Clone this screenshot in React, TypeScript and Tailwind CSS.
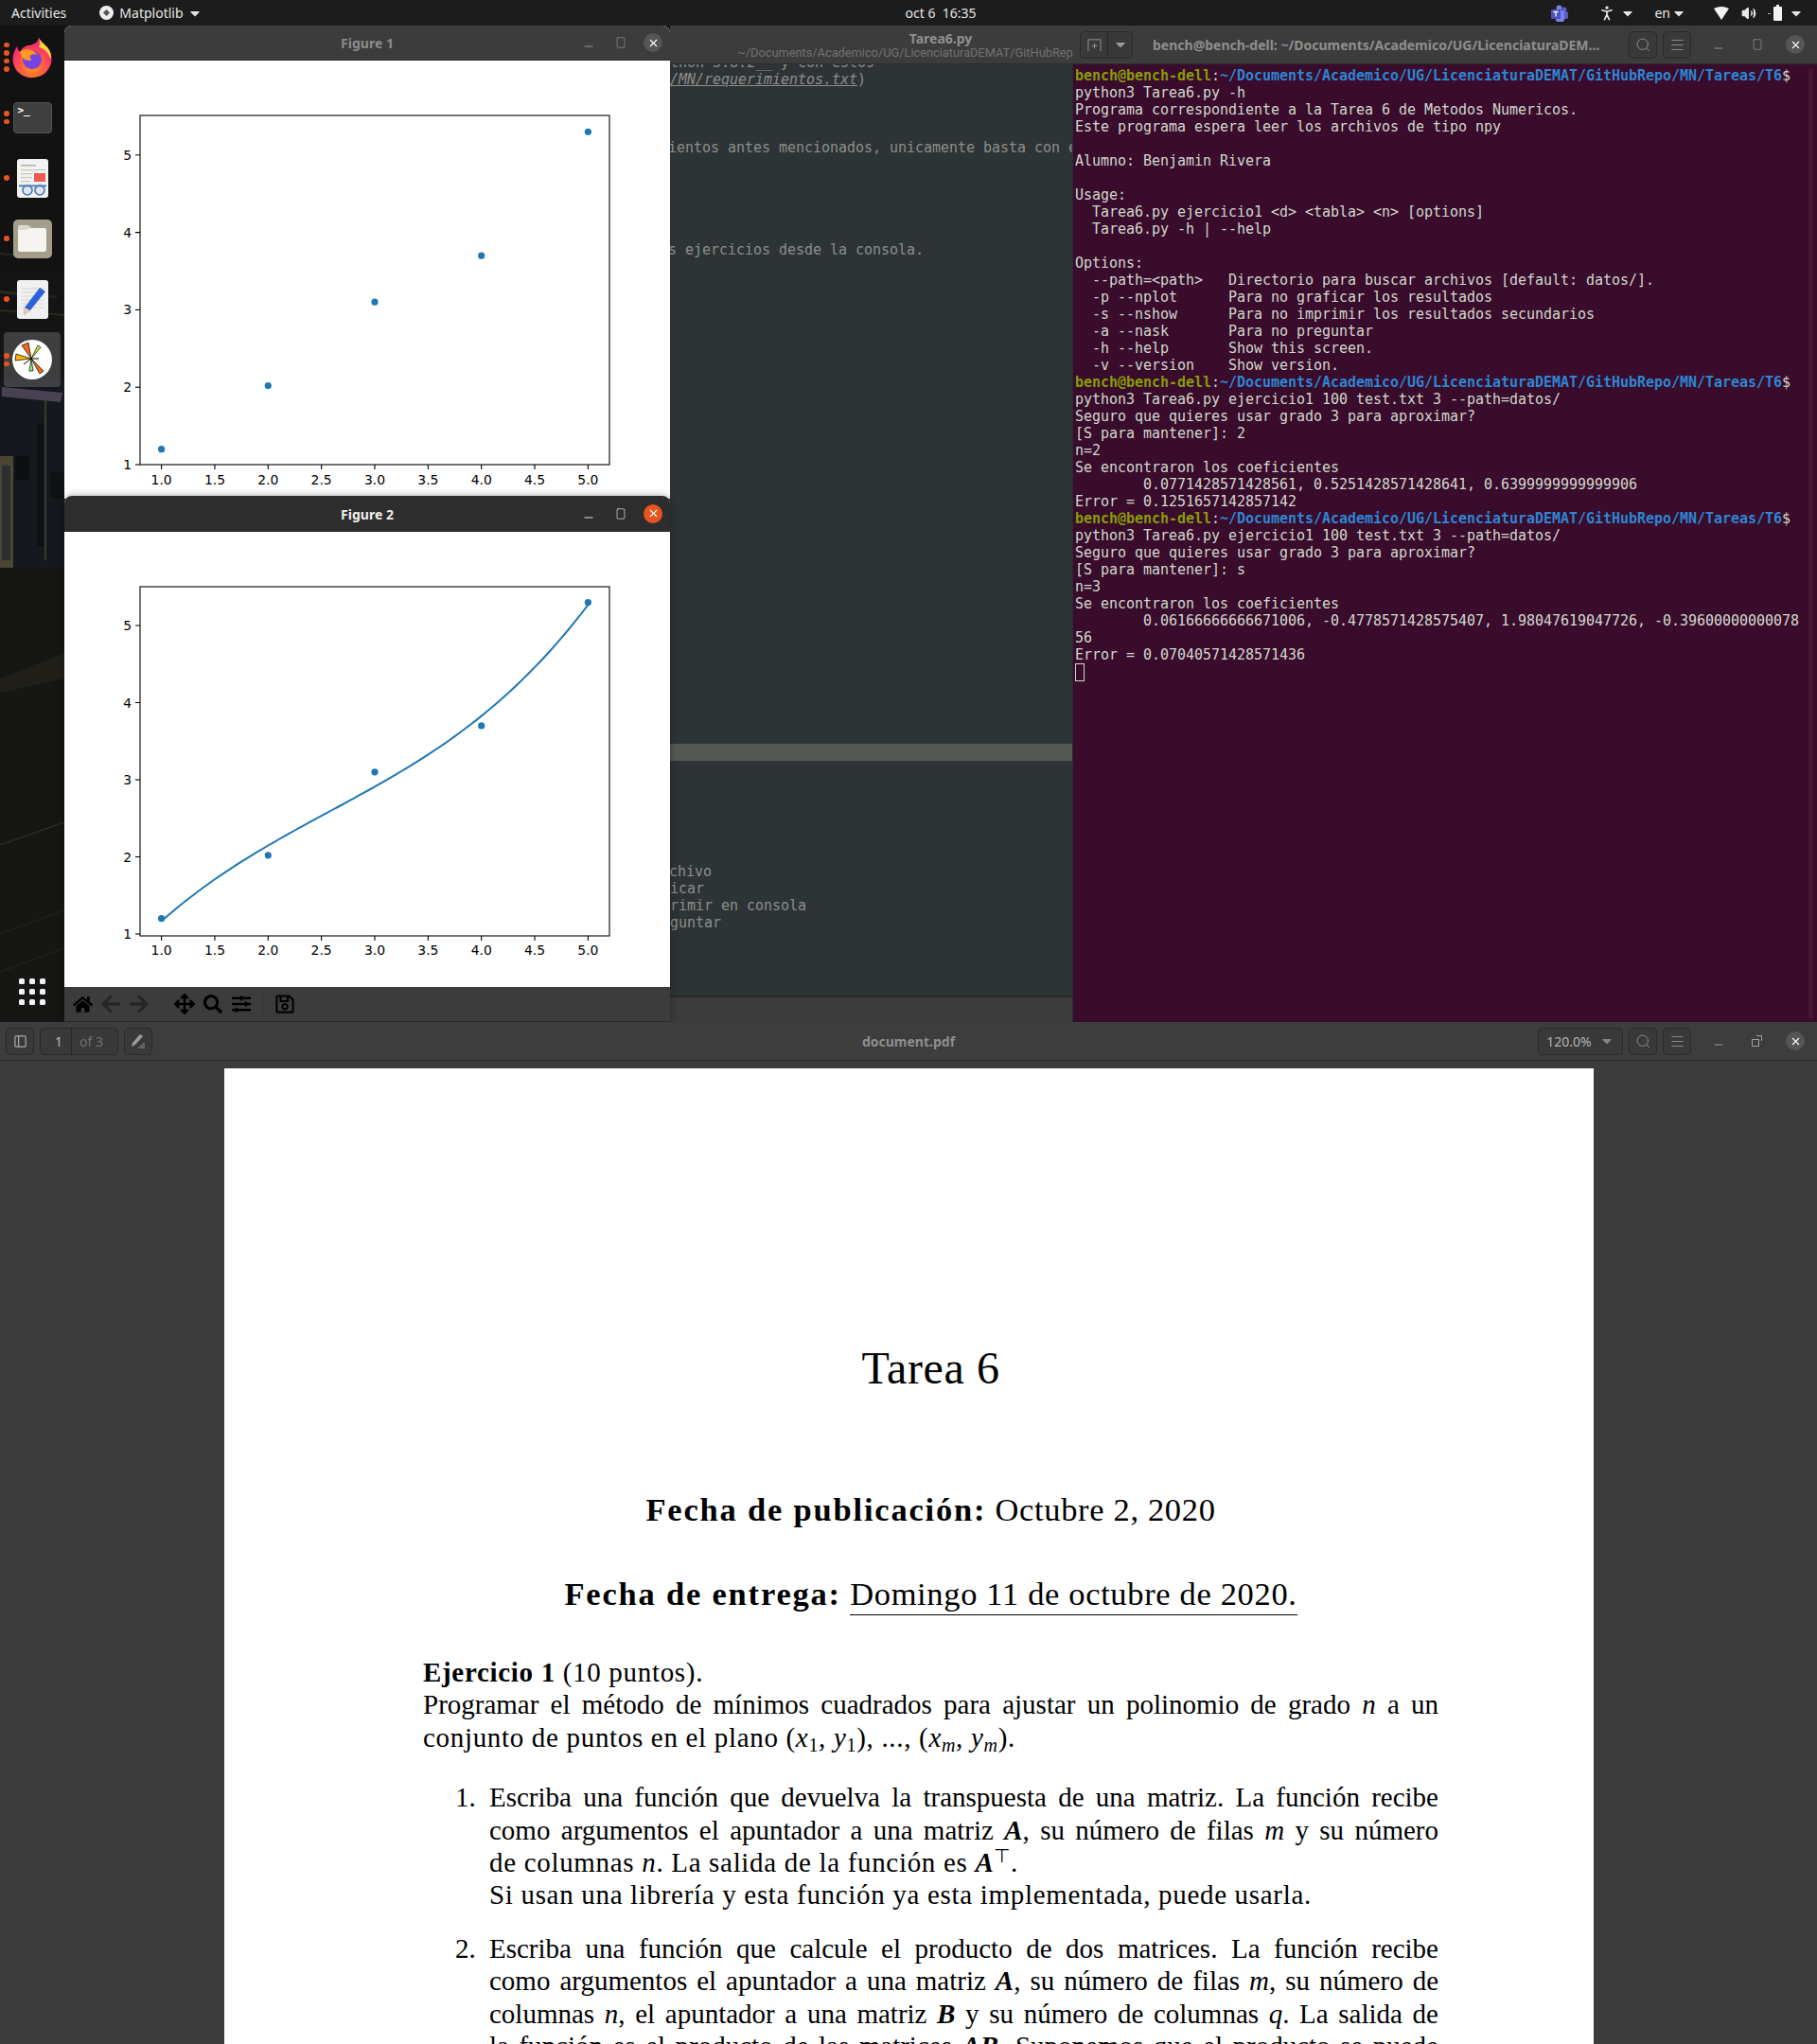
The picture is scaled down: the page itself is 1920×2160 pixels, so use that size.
import { ReactNode } from "react";
import { FaHome, FaArrowLeft, FaArrowRight, FaArrowsAlt, FaSearch, FaSlidersH, FaRegSave, FaCaretDown } from "react-icons/fa";
import { Search, Menu, X, Minus, Square, PanelLeft, PersonStanding, Volume2 } from "lucide-react";

const ui = "font-['Noto_Sans','Roboto',sans-serif]";
const mono = "font-['DejaVu_Sans_Mono','Liberation_Mono',monospace] text-[15px] tracking-[-0.03px]";

// matplotlib figure, same size in both windows
const xTicks = [1, 1.5, 2, 2.5, 3, 3.5, 4, 4.5, 5];
const yTicks = [1, 2, 3, 4, 5];
const points: [number, number][] = [[1, 1.2], [2, 2.02], [3, 3.1], [4, 3.7], [5, 5.3]];
const px = (v: number) => 102.6 + 112.7 * (v - 1);

function Plot({ y0, unit, curve }: { y0: number; unit: number; curve?: boolean }) {
  const py = (v: number) => y0 - (v - 1) * unit;
  let d = "";
  if (curve) {
    for (let i = 0; i <= 80; i++) {
      const x = 1 + (i / 80) * 4;
      const y = 0.0616667 * x * x * x - 0.47786 * x * x + 1.98048 * x - 0.396;
      d += (i ? "L" : "M") + px(x).toFixed(1) + " " + py(y).toFixed(1);
    }
  }
  return (
    <svg viewBox="0 0 640 481" className="block shrink-0 w-[640px] h-[481px]">
      <rect x="80" y="58" width="496" height="369" fill="none" stroke="#000" strokeWidth="1.1" />
      {xTicks.map((t) => (
        <g key={t}>
          <line x1={px(t)} x2={px(t)} y1="427" y2="432" stroke="#000" strokeWidth="1.1" />
          <text x={px(t)} y={curve ? 447 : 448} textAnchor="middle" fontSize="13.9" fontFamily="DejaVu Sans" fill="#000">{t.toFixed(1)}</text>
        </g>
      ))}
      {yTicks.map((t) => (
        <g key={t}>
          <line x1="75" x2="80" y1={py(t)} y2={py(t)} stroke="#000" strokeWidth="1.1" />
          <text x="71" y={py(t) + 5} textAnchor="end" fontSize="13.9" fontFamily="DejaVu Sans" fill="#000">{t}</text>
        </g>
      ))}
      {curve && <path d={d} fill="none" stroke="#1f77b4" strokeWidth="2" />}
      {points.map(([x, y]) => (
        <circle key={x} cx={px(x)} cy={py(y)} r="3.6" fill="#1f77b4" />
      ))}
    </svg>
  );
}

function WinControls({ focused, restore, wide }: { focused?: boolean; restore?: boolean; wide?: boolean }) {
  const c = focused ? "text-white" : "text-[#a0a0a0]";
  return (
    <div className={`flex items-center justify-end ${wide ? "pr-[13px]" : "pr-[8px]"} ${c}`}>
      <Minus size={14} strokeWidth={1.5} className="translate-y-[4px]" />
      <div className={wide ? "ml-[27px] mr-[23px]" : "ml-[20px] mr-[17px]"}>
        {restore ? (
          <div className="relative w-[14px] h-[14px]">
            <div className="absolute left-[1px] bottom-[1px] w-[8px] h-[8px] border border-current" />
            <div className="absolute right-[2px] top-[1px] w-[6px] h-[6px] border-t border-r border-current" />
          </div>
        ) : (
          <Square size={14} strokeWidth={1.2} className="scale-x-75" />
        )}
      </div>
      <div className={`w-[20px] h-[20px] rounded-full flex items-center justify-center text-white ${focused ? "bg-[#e95420]" : "bg-[#555555]"}`}>
        <X size={13} strokeWidth={2} />
      </div>
    </div>
  );
}

function FigureWindow({ title, focused, children, className }: { title: string; focused?: boolean; children: ReactNode; className: string }) {
  return (
    <div className={`absolute left-[68px] w-[640px] overflow-hidden rounded-t-[8px] flex flex-col ${className}`}>
      <div className={`shrink-0 grid grid-cols-[1fr_auto_1fr] items-center border-b border-[#262626] ${ui} text-[14px] font-bold ${focused ? "h-[38px] bg-[#2d2d2d] text-[#f0f0f0]" : "h-[37px] bg-[#3c3c3c] text-[#8c8c8c]"}`}>
        <div />
        <div className="pt-[1px]">{title}</div>
        <WinControls focused={focused} />
      </div>
      {children}
    </div>
  );
}

function Btn({ className, children }: { className: string; children?: ReactNode }) {
  return <div className={`h-[29px] shrink-0 rounded-[5px] border border-[#2a2a2a] bg-[#393939] flex items-center justify-center ${className}`}>{children}</div>;
}

function Wallpaper() {
  return (
    <svg viewBox="0 0 68 1053" preserveAspectRatio="none" className="absolute inset-0 w-full h-full">
      <rect width="68" height="1053" fill="#141414" />
      <rect y="0" width="68" height="260" fill="#121212" />
      <path d="M0 240 L30 243 L30 244 L0 242Z M0 280 L60 286 L60 288 L0 283Z M0 300 L68 305 L68 307 L0 302Z" fill="#2a281f" />
      <rect y="373" width="68" height="200" fill="#15181d" />
      <path d="M2 382 L66 388 L64 398 L2 392Z" fill="#494252" />
      <rect x="0" y="455" width="14" height="118" fill="#4a4535" />
      <rect x="2" y="465" width="9" height="100" fill="#2a2f30" />
      <rect x="47" y="395" width="2" height="170" fill="#3a3a30" />
      <rect x="39" y="420" width="7" height="130" fill="#0e1014" />
      <rect x="16" y="455" width="15" height="25" fill="#0d0f12" />
      <rect x="54" y="472" width="14" height="28" fill="#0f1115" />
      <rect y="573" width="68" height="480" fill="#161614" />
      <path d="M0 690 L68 663 L68 690 L0 705Z" fill="#201f19" />
      <path d="M0 866 L68 842" stroke="#333331" strokeWidth="1" />
      <path d="M0 960 L68 935 M0 1000 L68 975" stroke="#1e1e1c" strokeWidth="2" />
    </svg>
  );
}

function DockSlot({ dots, active, children }: { dots: number; active?: boolean; children: ReactNode }) {
  return (
    <div className="relative h-16 flex items-center justify-center">
      {active && <div className="absolute left-[4px] right-[4px] top-[3px] bottom-[3px] rounded-[4px] bg-[#ffffff2e]" />}
      <div className="absolute left-[4px] top-0 bottom-0 flex flex-col justify-center gap-[3px]">
        {Array.from({ length: dots }).map((_, i) => (
          <div key={i} className="w-[5.5px] h-[5.5px] rounded-full bg-[#e95420]" />
        ))}
      </div>
      <div className="relative">{children}</div>
    </div>
  );
}

function Dock() {
  return (
    <div className="absolute left-0 top-0 bottom-0 w-[68px] overflow-hidden flex flex-col">
      <Wallpaper />
      <div className="relative pt-px flex-1 flex flex-col">
        <DockSlot dots={4}>
          <svg viewBox="0 0 42 44" className="w-[42px] h-[43px]">
            <defs>
              <radialGradient id="fx" cx="0.5" cy="0.75" r="0.75">
                <stop offset="0" stopColor="#ff980e" />
                <stop offset="0.6" stopColor="#ff3f5e" />
                <stop offset="1" stopColor="#e31587" />
              </radialGradient>
            </defs>
            <path d="M28 0 C29 5 35 8 38 12 C42 18 43 24 41 30 C38 39 30 44 21 44 C9 44 0 35 0 24 C0 19 2 14 5 10 C5 13 6 15 8 16 C10 12 14 9 18 9 C23 8 28 6 28 0Z" fill="url(#fx)" />
            <path d="M28 0 C29 5 35 8 38 12 C41 16 42 20 41 24 C38 16 33 12 28 11 C30 8 29 4 28 0Z" fill="#ffd43a" />
            <circle cx="21" cy="25" r="10" fill="#7542e5" />
            <path d="M8 16 C13 12 22 13 27 20 C20 16 16 22 21 25 C14 27 8 22 8 16Z" fill="#ff9a1f" />
          </svg>
        </DockSlot>
        <DockSlot dots={2}>
          <div className="w-[41px] h-[33px] rounded-[4px] bg-[#3f3f3f] border border-[#555] relative overflow-hidden">
            <span className="absolute left-[4px] top-[1px] text-[11px] leading-[13px] text-white font-['DejaVu_Sans_Mono',monospace] font-bold">&gt;_</span>
          </div>
        </DockSlot>
        <DockSlot dots={1}>
          <svg viewBox="0 0 33 41" className="w-[33px] h-[41px]">
            <rect width="33" height="41" rx="3" fill="#f2f2f2" />
            <rect x="4" y="6" width="16" height="1.5" fill="#b5ad97" />
            <rect x="4" y="11" width="26" height="1.2" fill="#cdc8b8" />
            <rect x="4" y="15" width="12" height="1.2" fill="#cdc8b8" />
            <rect x="4" y="19" width="12" height="1.2" fill="#cdc8b8" />
            <rect x="4" y="23" width="10" height="1.2" fill="#cdc8b8" />
            <rect x="18" y="15" width="12" height="9" fill="#ee5a52" />
            <circle cx="11" cy="33" r="5" fill="#dfe7ee" stroke="#3f78b8" strokeWidth="1.6" />
            <circle cx="24" cy="33" r="5" fill="#dfe7ee" stroke="#3f78b8" strokeWidth="1.6" />
            <rect x="2" y="27.5" width="29" height="1.8" fill="#3f78b8" />
          </svg>
        </DockSlot>
        <DockSlot dots={1}>
          <div className="w-[41px] h-[41px] rounded-[5px] bg-[#a39e8c] flex items-center justify-center">
            <svg viewBox="0 0 30 30" className="w-[30px] h-[30px]">
              <path d="M0 4 Q0 1 3 1 L10 1 L14 4 L28 4 Q30 4 30 6 L30 27 Q30 29 28 29 L2 29 Q0 29 0 27Z" fill="#f5f4f1" />
              <path d="M0 4 Q0 1 3 1 L10 1 L14 4 L8 6 L0 6Z" fill="#dcd8cc" />
            </svg>
          </div>
        </DockSlot>
        <DockSlot dots={1}>
          <svg viewBox="0 0 33 41" className="w-[33px] h-[41px]">
            <rect width="33" height="41" rx="3" fill="#f0f0f0" />
            <path d="M5 9H28M5 13H28M5 17H28M5 21H28M5 25H28M5 29H28" stroke="#d6d6d6" strokeWidth="1" />
            <path d="M24 8 L30 12 L14 32 L7 37 L8 29Z" fill="#2d62d8" />
            <path d="M8 29 L14 32 L7 37Z" fill="#f1c9a0" />
          </svg>
        </DockSlot>
        <DockSlot dots={2} active>
          <svg viewBox="0 0 42 42" className="w-[42px] h-[42px]">
            <circle cx="21" cy="21" r="21" fill="#fff" />
            <path d="M20 20 L10 6 L17 3Z" fill="#f26a10" stroke="#000" strokeWidth="0.7" />
            <path d="M20 20 L4 15 L3 22Z" fill="#ffb000" stroke="#000" strokeWidth="0.7" />
            <path d="M20 20 L27 6 L30 8Z" fill="#c8f02c" stroke="#000" strokeWidth="0.7" />
            <path d="M20 20 L33 33 L29 36Z" fill="#f26a10" stroke="#000" strokeWidth="0.7" />
            <path d="M20 20 L18 33 L22 33Z" fill="#8cf070" stroke="#000" strokeWidth="0.7" />
            <path d="M20 20 L28 20 M20 20 L12 26" stroke="#000" strokeWidth="1" />
          </svg>
        </DockSlot>
        <div className="mt-auto mb-[18px] grid grid-cols-3 gap-x-[5px] gap-y-[5px] w-[28px] mx-auto">
          {Array.from({ length: 9 }).map((_, i) => (
            <div key={i} className="w-[6px] h-[6px] rounded-[1.5px] bg-[#f2f2f2]" />
          ))}
        </div>
      </div>
    </div>
  );
}

function TopBar() {
  return (
    <div className={`h-[27px] shrink-0 bg-[#1c1c1c] text-[#e6e6e6] text-[14px] grid grid-cols-[1fr_auto_1fr] items-center ${ui}`}>
      <div className="flex items-center pl-[12px]">
        <span>Activities</span>
        <div className="ml-[35px] w-[15px] h-[15px] rounded-full bg-[#eeeeee] flex items-center justify-center">
          <div className="w-[5px] h-[5px] rotate-45 bg-[#555]" />
        </div>
        <span className="ml-[6px]">Matplotlib</span>
        <FaCaretDown size={16} className="ml-[4px]" />
      </div>
      <div className="pl-[68px]">oct 6&nbsp; 16:35</div>
      <div className="flex items-center justify-end pr-[14px]">
        <svg viewBox="0 0 18 18" className="w-[18px] h-[18px]">
          <circle cx="14" cy="5" r="2.4" fill="#5b5fc7" />
          <rect x="9" y="7" width="9" height="8" rx="2" fill="#5b5fc7" />
          <circle cx="8.5" cy="3.5" r="3" fill="#7b83eb" />
          <rect x="5" y="6" width="9" height="12" rx="2" fill="#7b83eb" />
          <rect x="0" y="5" width="10" height="10" rx="1" fill="#4b53bc" />
          <path d="M2.5 7.5H7.5M5 7.5V12.5" stroke="#fff" strokeWidth="1.3" />
        </svg>
        <PersonStanding size={20} className="ml-[31px]" />
        <FaCaretDown size={16} className="ml-[4px]" />
        <span className="ml-[20px]">en</span>
        <FaCaretDown size={16} className="ml-[1px]" />
        <svg viewBox="0 0 16 14" className="ml-[29px] w-[16px] h-[14px]">
          <path d="M0 2 Q8 -2 16 2 L8 14Z" fill="#f2f2f2" />
        </svg>
        <Volume2 size={16} className="ml-[13px]" fill="currentColor" />
        <svg viewBox="0 0 16 18" className="ml-[12px] w-[16px] h-[18px]">
          <rect x="6" y="2" width="9" height="15" rx="1" fill="#f2f2f2" />
          <rect x="9" y="0" width="3" height="2" fill="#f2f2f2" />
          <rect x="0" y="9" width="3" height="1" fill="#aaa" />
        </svg>
        <FaCaretDown size={16} className="ml-[6px]" />
      </div>
    </div>
  );
}

function Editor() {
  return (
    <div className="absolute left-[708px] top-0 bottom-0 w-[426px] flex flex-col overflow-hidden bg-[#2e3436]">
      <div className="h-[41px] shrink-0 relative bg-[#3c3c3c] border-b border-[#2b2b2b] z-10 overflow-hidden">
        <div className={`absolute left-[286px] -translate-x-1/2 top-[3px] text-[14px] font-bold text-[#8f8f8f] ${ui}`}>Tarea6.py</div>
        <div className="absolute left-[71px] top-[19px] whitespace-nowrap text-[12.8px] text-[#727272] font-['Roboto',sans-serif]">~/Documents/Academico/UG/LicenciaturaDEMAT/GitHubRepo/MN/Tareas/T6</div>
      </div>
      <div className={`flex-1 -mt-[11px] whitespace-pre text-[#8a8e8b] leading-[18px] ${mono}`}>
        <div>thon 3.8.2__ y con estos</div>
        <div><span className="italic underline">/MN/requerimientos.txt</span>)</div>
        <div className="mt-[54px] -ml-[2px]">ientos antes mencionados, unicamente basta con el comando</div>
        <div className="mt-[90px] -ml-[2px]">s ejercicios desde la consola.</div>
        <div className="mt-[513px] h-[18px] bg-[#555753]" />
        <div className="mt-[108px] -ml-[1px]">chivo</div>
        <div>icar</div>
        <div>rimir en consola</div>
        <div>guntar</div>
      </div>
      <div className="h-[28px] shrink-0 bg-[#3c3c3c] border-t-[2px] border-[#2a2a2a]" />
    </div>
  );
}

const promptPath = "~/Documents/Academico/UG/LicenciaturaDEMAT/GitHubRepo/MN/Tareas/T6";
const termLines = [
  "P",
  "python3 Tarea6.py -h",
  "Programa correspondiente a la Tarea 6 de Metodos Numericos.",
  "Este programa espera leer los archivos de tipo npy",
  "",
  "Alumno: Benjamin Rivera",
  "",
  "Usage:",
  "  Tarea6.py ejercicio1 <d> <tabla> <n> [options]",
  "  Tarea6.py -h | --help",
  "",
  "Options:",
  "  --path=<path>   Directorio para buscar archivos [default: datos/].",
  "  -p --nplot      Para no graficar los resultados",
  "  -s --nshow      Para no imprimir los resultados secundarios",
  "  -a --nask       Para no preguntar",
  "  -h --help       Show this screen.",
  "  -v --version    Show version.",
  "P",
  "python3 Tarea6.py ejercicio1 100 test.txt 3 --path=datos/",
  "Seguro que quieres usar grado 3 para aproximar?",
  "[S para mantener]: 2",
  "n=2",
  "Se encontraron los coeficientes",
  "        0.0771428571428561, 0.5251428571428641, 0.6399999999999906",
  "Error = 0.1251657142857142",
  "P",
  "python3 Tarea6.py ejercicio1 100 test.txt 3 --path=datos/",
  "Seguro que quieres usar grado 3 para aproximar?",
  "[S para mantener]: s",
  "n=3",
  "Se encontraron los coeficientes",
  "        0.06166666666671006, -0.4778571428575407, 1.98047619047726, -0.39600000000078",
  "56",
  "Error = 0.07040571428571436",
];

function Terminal() {
  return (
    <div className="absolute left-[1133px] top-0 bottom-0 right-0 flex flex-col border-l border-[#2b2b2b]">
      <div className={`h-[41px] shrink-0 bg-[#3c3c3c] border-b border-[#2b2b2b] flex items-center ${ui}`}>
        <Btn className="ml-[7px] w-[56px] !justify-start">
          <div className="w-[29px] h-full border-r border-[#2a2a2a] flex items-center justify-center">
            <svg viewBox="0 0 16 16" className="w-[15px] h-[15px]" fill="none" stroke="#9a9a9a" strokeWidth="1">
              <path d="M1 15V2H15V15M8 6V12M5 9H11" />
            </svg>
          </div>
          <FaCaretDown size={16} className="ml-[5px] text-[#9a9a9a]" />
        </Btn>
        <div className="ml-[21px] w-[481px] whitespace-nowrap text-[14px] font-bold text-[#8f8f8f] overflow-hidden">bench@bench-dell: ~/Documents/Academico/UG/LicenciaturaDEM...</div>
        <Btn className="ml-[22px] w-[30px]"><Search size={17} strokeWidth={1.2} className="text-[#9a9a9a]" /></Btn>
        <Btn className="ml-[6px] w-[30px]"><Menu size={17} strokeWidth={1.2} className="text-[#9a9a9a]" /></Btn>
        <div className="flex-1"><WinControls wide /></div>
      </div>
      <div className={`relative flex-1 bg-[#380c2a] pt-[3px] pl-[2px] text-[#d3d7cf] leading-[18px] whitespace-pre overflow-hidden ${mono}`}>
        {termLines.map((l, i) => (
          <div key={i} className="h-[18px]">
            {l === "P" ? (
              <>
                <span className="text-[#8a9a0a] font-bold">bench@bench-dell</span>:
                <span className="text-[#2f86d2] font-bold">{promptPath}</span>$
              </>
            ) : l}
          </div>
        ))}
        <div className="w-[10px] h-[19px] border border-[#d3d7cf]" />
        <div className="absolute right-[4px] top-[4px] bottom-[4px] w-[5px] rounded-full bg-[#43172f]" />
      </div>
    </div>
  );
}

function Toolbar() {
  const box = "w-[30px] flex items-center justify-center";
  return (
    <div className="h-[37px] shrink-0 bg-[#3c3c3c] border-b border-[#2a2a2a] flex items-center pl-[4px] text-black">
      <div className={box}><FaHome size={21} /></div>
      <div className={`${box} text-[#262626]`}><FaArrowLeft size={22} /></div>
      <div className={`${box} text-[#262626]`}><FaArrowRight size={22} /></div>
      <div className="w-[18px] flex justify-center"><div className="w-px h-[30px] bg-[#383838]" /></div>
      <div className={box}><FaArrowsAlt size={22} /></div>
      <div className={box}><FaSearch size={20} /></div>
      <div className={box}><FaSlidersH size={20} /></div>
      <div className="w-[16px] flex justify-center"><div className="w-px h-[30px] bg-[#383838]" /></div>
      <div className={box}><FaRegSave size={22} /></div>
    </div>
  );
}

function EvinceBar() {
  return (
    <div className={`h-[41px] shrink-0 relative bg-[#3d3d3d] border-b border-[#2b2b2b] flex items-center text-[14px] ${ui}`}>
      <Btn className="ml-[6px] w-[30px]"><PanelLeft size={15} className="text-[#a8a8a8]" /></Btn>
      <Btn className="ml-[6px] w-[83px] !justify-start">
        <div className="w-[33px] h-full border-r border-[#2a2a2a] flex items-center justify-end pr-[9px] text-[#b8b8b8]">1</div>
        <div className="pl-[8px] text-[#6f6f6f]">of 3</div>
      </Btn>
      <Btn className="ml-[6px] w-[30px]">
        <svg viewBox="0 0 16 16" className="w-[16px] h-[16px]" fill="#9c9c9c">
          <path d="M10 1 L13 3 L5 12 L1 14 L2 10Z" />
          <path d="M10 13H15M8 15H15M12 11H15" stroke="#9c9c9c" strokeWidth="0.8" />
        </svg>
      </Btn>
      <div className="absolute left-0 right-0 text-center font-bold text-[#8f8f8f] text-[14px]">document.pdf</div>
      <div className="ml-auto flex items-center relative">
        <Btn className="w-[90px] gap-[8px] text-[#b4b4b4] text-[14px]">120.0% <FaCaretDown size={16} className="text-[#858585]" /></Btn>
        <Btn className="ml-[6px] w-[30px]"><Search size={17} strokeWidth={1.2} className="text-[#9a9a9a]" /></Btn>
        <Btn className="ml-[6px] w-[30px]"><Menu size={17} strokeWidth={1.2} className="text-[#9a9a9a]" /></Btn>
        <div className="ml-[22px]"><WinControls restore wide /></div>
      </div>
    </div>
  );
}

function J({ children, className = "" }: { children: ReactNode; className?: string }) {
  return <div className={`h-[34.4px] leading-[34.4px] whitespace-nowrap [text-align:justify] [text-align-last:justify] ${className}`}>{children}</div>;
}
function P({ children, className = "" }: { children: ReactNode; className?: string }) {
  return <div className={`h-[34.4px] leading-[34.4px] whitespace-nowrap tracking-[0.68px] ${className}`}>{children}</div>;
}
const BI = ({ children }: { children: ReactNode }) => <b className="italic">{children}</b>;

function PdfPage() {
  return (
    <div className="flex-1 overflow-hidden bg-[#3c3c3c] pt-[8px] pl-[237px] min-h-0">
      <div className="relative w-[1447px] h-[1040px] bg-white text-black font-['Liberation_Serif',serif] text-[29px] pl-[210px] pr-[164px] pt-[287px]">
        <div className="text-center text-[48px] leading-[60px] tracking-[0.6px]">Tarea 6</div>
        <div className="mt-[99px] text-center text-[34.5px] leading-[40px] tracking-[0.65px]"><b className="tracking-[1.8px]">Fecha de publicación:</b> Octubre 2, 2020</div>
        <div className="mt-[48px] text-center text-[34.5px] leading-[40px] tracking-[0.65px] whitespace-nowrap">
          <b className="tracking-[1.8px]">Fecha de entrega:</b> <span className="inline-block border-b-[1.5px] border-black leading-[42px] h-[44px]">Domingo 11 de octubre de 2020.</span>
        </div>
        <div className="mt-[43px]">
          <P><b>Ejercicio 1</b> (10 puntos).</P>
          <J>Programar el método de mínimos cuadrados para ajustar un polinomio de grado <i>n</i> a un</J>
          <P>conjunto de puntos en el plano (<i>x</i><sub className="text-[20px] leading-none">1</sub>, <i>y</i><sub className="text-[20px] leading-none">1</sub>), ..., (<i>x<sub className="text-[20px] leading-none">m</sub></i>, <i>y<sub className="text-[20px] leading-none">m</sub></i>).</P>
        </div>
        <div className="mt-[29px] flex">
          <div className="w-[70px] pl-[34px] h-[34.4px] leading-[34.4px] shrink-0">1.</div>
          <div className="flex-1 min-w-0">
            <J>Escriba una función que devuelva la transpuesta de una matriz. La función recibe</J>
            <J>como argumentos el apuntador a una matriz <BI>A</BI>, su número de filas <i>m</i> y su número</J>
            <P>de columnas <i>n</i>. La salida de la función es <BI>A</BI><sup className="text-[20px] leading-none">⊤</sup>.</P>
            <P>Si usan una librería y esta función ya esta implementada, puede usarla.</P>
          </div>
        </div>
        <div className="mt-[22px] flex">
          <div className="w-[70px] pl-[34px] h-[34.4px] leading-[34.4px] shrink-0">2.</div>
          <div className="flex-1 min-w-0">
            <J>Escriba una función que calcule el producto de dos matrices. La función recibe</J>
            <J>como argumentos el apuntador a una matriz <BI>A</BI>, su número de filas <i>m</i>, su número de</J>
            <J>columnas <i>n</i>, el apuntador a una matriz <BI>B</BI> y su número de columnas <i>q</i>. La salida de</J>
            <J>la función es el producto de las matrices <BI>AB</BI>. Suponemos que el producto se puede</J>
          </div>
        </div>
      </div>
    </div>
  );
}

export default function App() {
  return (
    <div className="w-[1920px] h-[2160px] overflow-hidden flex flex-col bg-[#3c3c3c]">
      <TopBar />
      <div className="relative h-[1053px] shrink-0 bg-[#141414]">
        <Dock />
        <Editor />
        <Terminal />
        <FigureWindow title="Figure 1" className="top-0 h-[500px] bg-white">
          <Plot y0={427} unit={81.8} />
        </FigureWindow>
        <FigureWindow title="Figure 2" focused className="top-[497px] h-[556px] bg-white shadow-[0_0_8px_rgba(0,0,0,0.35)]">
          <Plot y0={425} unit={81.5} curve />
          <Toolbar />
        </FigureWindow>
      </div>
      <EvinceBar />
      <PdfPage />
    </div>
  );
}
